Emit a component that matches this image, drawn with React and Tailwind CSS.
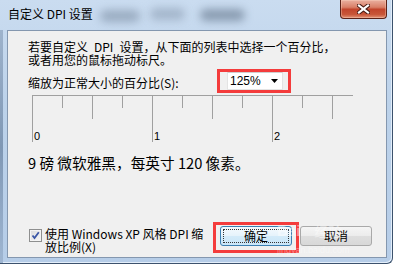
import React from "react";

const cjk = "font-['Noto_Sans_CJK_SC','Liberation_Sans',sans-serif]";

function CloseButton() {
  return (
    <div className="ml-auto mr-[5px] flex h-[19px] w-[47px] items-center justify-center rounded-b-[4px] border border-t-0 border-[#5b2218] bg-[linear-gradient(#eab0a0,#d98068_40%,#c2452c_52%,#c85638_80%,#e39276)] shadow-[inset_0_0_0_1px_rgba(255,220,200,0.35)]">
      <svg width="13" height="10" viewBox="0 0 13 10">
        <path d="M2 1.5 L11 8.5 M11 1.5 L2 8.5" stroke="#4a1d15" strokeWidth="4.2" strokeLinecap="square" />
        <path d="M2 1.5 L11 8.5 M11 1.5 L2 8.5" stroke="#ffffff" strokeWidth="2.2" strokeLinecap="square" />
      </svg>
    </div>
  );
}

function Combo() {
  return (
    <div className="flex h-[24px] w-[74px] border-[3px] border-[#f43c3c] pl-[7px] pr-[5px]">
      <div className="flex h-full w-[56px] items-center border border-[#e3e3e3] border-t-[#cfcfcf] bg-white pl-[2px]">
        <span className="font-['Liberation_Sans',sans-serif] text-[12px] leading-[12px] text-black">125%</span>
        <svg className="ml-auto mr-[4px]" width="7" height="4" viewBox="0 0 7 4">
          <path d="M0 0 H7 L3.5 4 Z" fill="#000" />
        </svg>
      </div>
    </div>
  );
}

function Ruler() {
  const ticks = [
    [0, 47], [30, 13], [60, 24], [90, 13], [120, 47], [150, 13],
    [180, 24], [210, 13], [240, 47], [270, 13], [300, 24],
  ];
  return (
    <svg width="321" height="48" className="ml-[24px] mt-[2px] block">
      <line x1="0" y1="0.5" x2="321" y2="0.5" stroke="#a0a0a0" />
      {ticks.map(([x, h]) => (
        <line key={x} x1={x + 0.5} y1="0" x2={x + 0.5} y2={h} stroke="#a0a0a0" />
      ))}
      {["0", "1", "2"].map((t, i) => (
        <text key={t} x={i * 120 + 2} y="45" fontSize="11" fontFamily="Liberation Sans" fill="#000">
          {t}
        </text>
      ))}
    </svg>
  );
}

function Checkbox() {
  return (
    <div className="mt-[7px] h-[13px] w-[13px] shrink-0 border border-[#8e8f8f] bg-[linear-gradient(135deg,#d9dadc,#f7f7f7)] shadow-[inset_0_0_0_1px_#f4f4f4]">
      <svg width="11" height="11" viewBox="0 0 11 11">
        <path d="M2.5 5.5 L4.5 8 L8.8 2.2" fill="none" stroke="#3a56a6" strokeWidth="1.8" />
      </svg>
    </div>
  );
}

export default function App() {
  return (
    <div className={`relative h-[265px] w-[394px] overflow-hidden bg-white ${cjk}`}>
      <div className="relative flex h-[264px] w-[393px] flex-col overflow-hidden rounded-br-[6px] border-b border-r border-[#3c526d] bg-[linear-gradient(#cadcf0,#bcd2ea_40%,#b6cde8)] shadow-[inset_-1px_-1px_0_#e3eefa]">
        {/* blurred glass behind the title bar */}
        <div className="absolute left-[100px] top-[10px] h-[12px] w-[40px] rounded-full bg-[#6d7f96]/50 blur-[4px]" />
        <div className="absolute left-[150px] top-[8px] h-[12px] w-[35px] rounded-full bg-[#6d7f96]/40 blur-[4px]" />
        <div className="absolute left-[200px] top-[9px] h-[12px] w-[45px] rounded-full bg-[#56677e]/55 blur-[4px]" />
        <div className="absolute left-0 top-[30px] h-[234px] w-[3px] bg-[linear-gradient(#9eb3cc,#7f97b4_50%,#9fb6d2)]" />

        <div className="relative flex h-[30px] shrink-0 items-start">
          <div className="pl-[8px] pt-[6px] text-[12px] leading-[16px] text-black">自定义 DPI 设置</div>
          <CloseButton />
        </div>

        <div className="relative mb-[5px] ml-[7px] mr-[5px] flex flex-1 flex-col border border-[#8497af] bg-[#f0f0f0] text-black">
          <p className="mt-[9px] pl-[20px] text-[12px] leading-[13px]">
            若要自定义<span className="px-[6px]">DPI</span>设置，从下面的列表中选择一个百分比，
            <br />
            或者用您的鼠标拖动标尺。
          </p>

          <div className="mt-[3px] flex items-start">
            <div className="w-[209px] pl-[20px] pt-[8px] text-[12px] leading-[12px]">缩放为正常大小的百分比(S):</div>
            <Combo />
          </div>

          <Ruler />

          <div className="mt-[10px] pl-[20px] text-[14.67px] leading-[20px]">9 磅 微软雅黑，每英寸 120 像素。</div>

          <div className="mt-[49px] flex h-[31px] items-start">
            <div className="flex w-[205px] items-start pl-[21px]">
              <Checkbox />
              <div className="ml-[3px] mt-[5px] text-[12px] leading-[13px]">
                使用 Windows XP 风格 DPI 缩
                <br />
                放比例(X)
              </div>
            </div>
            <div className="h-[31px] w-[86px] border-[3px] border-[#f43c3c] pl-[4px] pt-[1px]">
              <div className="flex h-[20px] w-[72px] items-center justify-center rounded-[3px] border border-[#3c7fb1] bg-[linear-gradient(#f4fafe,#e6f3fb_48%,#d3ebf9_52%,#c9e5f8)] p-[2px]">
                <div className="flex h-full w-full items-center justify-center border border-dotted border-[#333] text-[12px] leading-[12px]">
                  确定
                </div>
              </div>
            </div>
            <div className="ml-[1px] mt-[4px] flex h-[20px] w-[72px] items-center justify-center rounded-[3px] border border-[#a9a9a9] bg-[linear-gradient(#f5f5f5,#ececec_48%,#dedede_52%,#d8d8d8)] text-[12px] leading-[12px]">
              取消
            </div>
          </div>

          {/* faint watermark over the buttons */}
          <div className="pointer-events-none absolute left-[269px] top-[192px] flex items-end gap-[14px] text-white/45">
            <span className="font-['Liberation_Sans',sans-serif] text-[15px] font-bold leading-[16px]">Bai</span>
            <span className="text-[14px] leading-[16px]">经验</span>
          </div>
          <div className="pointer-events-none absolute left-[269px] top-[215px] font-['Liberation_Sans',sans-serif] text-[9px] leading-[9px] text-white/40">
            jingyan.baidu.com
          </div>
        </div>
      </div>
    </div>
  );
}
